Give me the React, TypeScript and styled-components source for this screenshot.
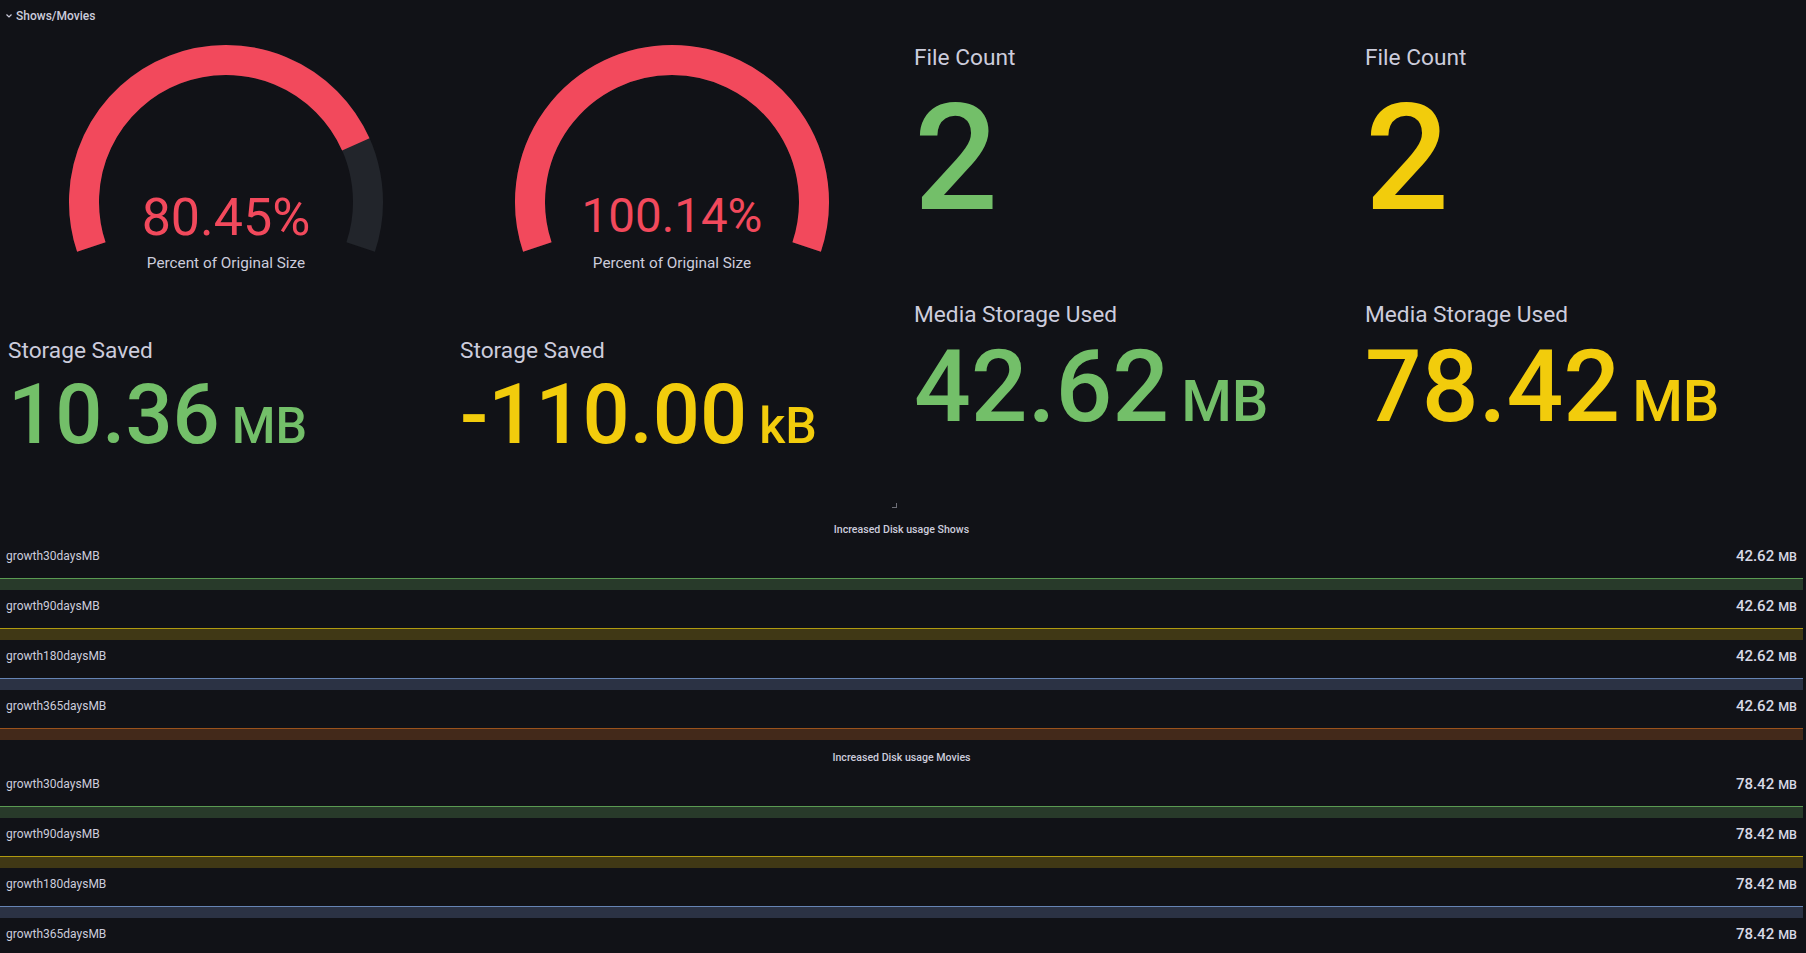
import { FC } from 'react';
import styled, { createGlobalStyle } from 'styled-components';

const GlobalStyle = createGlobalStyle`
  body {
    margin: 0;
    background: #111217;
    color: #ccccdc;
    font-family: Roboto, "Liberation Sans", sans-serif;
  }
`;

const Page = styled.div`
  width: 1806px;
  height: 953px;
  overflow: hidden;
  background: #111217;
`;

const RowHeader = styled.div`
  height: 28px;
  box-sizing: border-box;
  padding: 3px 0 0 6px;
  display: flex;
  align-items: center;
  gap: 4px;
  font-size: 12px;
  font-weight: 500;
  color: #ccccdc;
`;

const TopGrid = styled.div`
  display: grid;
  grid-template-columns: 452px 451px 451px 452px;
  height: 482px;
`;

const Column = styled.div`
  display: flex;
  flex-direction: column;
`;

const GaugePanel = styled.div`
  height: 252px;
`;

const StatPanel = styled.div<{ $h: number; $pt: number; $pl: number }>`
  position: relative;
  height: ${({ $h }) => $h}px;
  box-sizing: border-box;
  padding: ${({ $pt }) => $pt}px 0 0 ${({ $pl }) => $pl}px;
`;

const StatTitle = styled.div`
  font-size: 22.7px;
  line-height: 1;
  color: #ccccdc;
  white-space: nowrap;
`;

const StatValue = styled.div<{ $size: number; $color: string; $gap: number }>`
  margin-top: ${({ $gap }) => $gap}px;
  font-size: ${({ $size }) => $size}px;
  line-height: 1;
  font-weight: 500;
  color: ${({ $color }) => $color};
  white-space: nowrap;
`;

const Unit = styled.span<{ $size: number }>`
  font-size: ${({ $size }) => $size}px;
  margin-left: 12px;
`;

const ResizeMark = styled.span`
  position: absolute;
  right: 6px;
  bottom: 2px;
  width: 4px;
  height: 4px;
  border-right: 1px solid #6e6f78;
  border-bottom: 1px solid #6e6f78;
`;

const BarPanel = styled.div<{ $pt: number }>`
  padding: ${({ $pt }) => $pt}px 3px 0 0;
`;

const BarTitle = styled.div`
  height: 24px;
  line-height: 24px;
  margin-bottom: 2px;
  text-align: center;
  font-size: 10.6px;
  font-weight: 500;
  color: #ccccdc;
`;

const BarRow = styled.div`
  margin-bottom: 4px;
`;

const BarText = styled.div`
  height: 24px;
  margin-bottom: 10px;
  padding: 0 6px;
  display: flex;
  align-items: center;
  justify-content: space-between;
  font-size: 12px;
  color: #ccccdc;
`;

const BarValue = styled.span`
  font-size: 15px;
  font-weight: 500;
  color: #d8d9e6;

  small {
    font-size: 12.5px;
    margin-left: 4px;
  }
`;

const Bar = styled.div<{ $line: string; $fill: string }>`
  height: 11px;
  border-top: 1px solid ${({ $line }) => $line};
  background: ${({ $fill }) => $fill};
`;

const RED = '#F2495C';
const GREEN = '#73BF69';
const YELLOW = '#F2CC0C';

const START = 198.5;
const SPAN = 217;
const CY = 174;
const R = 142;

const polar = (cx: number, r: number, deg: number) => {
  const a = (deg * Math.PI) / 180;
  return [cx + r * Math.cos(a), CY - r * Math.sin(a)];
};

const arcPath = (cx: number, from: number, to: number) => {
  const [x1, y1] = polar(cx, R, from);
  const [x2, y2] = polar(cx, R, to);
  const large = from - to > 180 ? 1 : 0;
  return `M ${x1} ${y1} A ${R} ${R} 0 ${large} 1 ${x2} ${y2}`;
};

interface GaugeProps {
  cx: number,
  value: number,
  text: string,
  size: number,
  baseline: number,
}

const Gauge: FC<GaugeProps> = ({ cx, value, text, size, baseline }) => {
  const fillEnd = START - SPAN * Math.min(value / 100, 1);
  return (
    <svg width="100%" height="252">
      <path d={arcPath(cx, START, START - SPAN)} stroke="#22252b" strokeWidth={30} fill="none" />
      <path d={arcPath(cx, START, fillEnd)} stroke={RED} strokeWidth={30} fill="none" />
      <text x={cx} y={baseline} textAnchor="middle" fontSize={size} fill={RED} fontFamily="Roboto, sans-serif">
        {text}
      </text>
      <text x={cx} y={240} textAnchor="middle" fontSize={15.3} fill="#ccccdc" fontFamily="Roboto, sans-serif">
        Percent of Original Size
      </text>
    </svg>
  );
};

const series = [
  { name: 'growth30daysMB', line: '#5a9a52', fill: '#283a2a' },
  { name: 'growth90daysMB', line: '#b09a10', fill: '#403815' },
  { name: 'growth180daysMB', line: '#6684b4', fill: '#2b3244' },
  { name: 'growth365daysMB', line: '#9a521c', fill: '#43291a' },
];

const BarGauge: FC<{ title: string; value: string; pt: number }> = ({ title, value, pt }) => (
  <BarPanel $pt={pt}>
    <BarTitle>{title}</BarTitle>
    {series.map(s => (
      <BarRow key={s.name}>
        <BarText>
          <span>{s.name}</span>
          <BarValue>{value}<small>MB</small></BarValue>
        </BarText>
        <Bar $line={s.line} $fill={s.fill} />
      </BarRow>
    ))}
  </BarPanel>
);

const App: FC = () => (
  <>
    <GlobalStyle />
    <Page>
      <RowHeader>
        <svg width="6" height="4" viewBox="0 0 6 4">
          <path d="M0.5 0.5 L3 3 L5.5 0.5" stroke="#ccccdc" strokeWidth="1.2" fill="none" />
        </svg>
        Shows/Movies
      </RowHeader>
      <TopGrid>
        <Column>
          <GaugePanel>
            <Gauge cx={226} value={80.45} text="80.45%" size={52} baseline={207} />
          </GaugePanel>
          <StatPanel $h={230} $pt={60} $pl={8}>
            <StatTitle>Storage Saved</StatTitle>
            <StatValue $size={83} $color={GREEN} $gap={10}>
              10.36<Unit $size={50}>MB</Unit>
            </StatValue>
          </StatPanel>
        </Column>
        <Column>
          <GaugePanel>
            <Gauge cx={220} value={100.14} text="100.14%" size={47.5} baseline={204} />
          </GaugePanel>
          <StatPanel $h={230} $pt={60} $pl={8}>
            <StatTitle>Storage Saved</StatTitle>
            <StatValue $size={83} $color={YELLOW} $gap={10}>
              -110.00<Unit $size={50}>kB</Unit>
            </StatValue>
            <ResizeMark />
          </StatPanel>
        </Column>
        <Column>
          <StatPanel $h={242} $pt={19} $pl={11}>
            <StatTitle>File Count</StatTitle>
            <StatValue $size={148} $color={GREEN} $gap={15}>2</StatValue>
          </StatPanel>
          <StatPanel $h={240} $pt={34} $pl={11}>
            <StatTitle>Media Storage Used</StatTitle>
            <StatValue $size={100} $color={GREEN} $gap={10}>
              42.62<Unit $size={58}>MB</Unit>
            </StatValue>
          </StatPanel>
        </Column>
        <Column>
          <StatPanel $h={242} $pt={19} $pl={11}>
            <StatTitle>File Count</StatTitle>
            <StatValue $size={148} $color={YELLOW} $gap={15}>2</StatValue>
          </StatPanel>
          <StatPanel $h={240} $pt={34} $pl={11}>
            <StatTitle>Media Storage Used</StatTitle>
            <StatValue $size={100} $color={YELLOW} $gap={10}>
              78.42<Unit $size={58}>MB</Unit>
            </StatValue>
          </StatPanel>
        </Column>
      </TopGrid>
      <BarGauge title="Increased Disk usage Shows" value="42.62" pt={8} />
      <BarGauge title="Increased Disk usage Movies" value="78.42" pt={2} />
    </Page>
  </>
);

export default App;
